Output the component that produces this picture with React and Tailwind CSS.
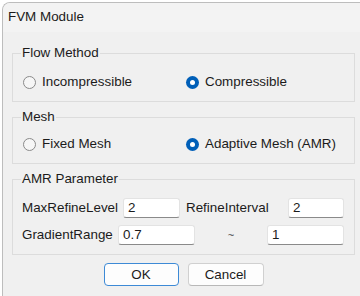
const font = { fontFamily: '"Liberation Sans", Arial, sans-serif' };

const Radio = ({ checked, label, className = '' }) => (
  <label className={`flex items-center h-[20px] ${className}`}>
    {checked ? (
      <span className="w-[13px] h-[13px] rounded-full bg-[#005fb8] flex items-center justify-center">
        <span className="w-[5px] h-[5px] rounded-full bg-white" />
      </span>
    ) : (
      <span className="w-[13px] h-[13px] rounded-full border border-[#8a8a8a] bg-[#f6f6f6]" />
    )}
    <span className="ml-[6px]">{label}</span>
  </label>
);

const Group = ({ title, className = '', children }) => (
  <fieldset className={`w-[343px] border border-[#dcdcdc] px-[8px] ${className}`}>
    <legend className="px-[1px] leading-[18px]">{title}</legend>
    {children}
  </fieldset>
);

const Field = ({ value, className = '' }) => (
  <div
    className={`h-[20px] bg-white border border-[#e3e3e3] border-b-[#8a8a8a] rounded-[3px] pl-[4px] flex items-center ${className}`}
  >
    {value}
  </div>
);

export default function App() {
  return (
    <div className="w-[360px] h-[296px] bg-white pl-[2px] pt-[2px] overflow-hidden text-[13.4px] text-[#1b1b1b]" style={font}>
      <div className="h-[400px] w-[400px] border-l border-t border-[#bdbdbd] rounded-tl-[8px] bg-[#f0f0f0] overflow-hidden">
        <div className="h-[29px] bg-[#f3f3f3] pl-[5px] flex items-center">FVM Module</div>

        <div className="ml-[9px]">
          <Group title="Flow Method" className="mt-[12px] pt-[10px] pb-[9px]">
            <div className="flex ml-[2px]">
              <Radio label="Incompressible" className="w-[163px]" />
              <Radio checked label="Compressible" />
            </div>
          </Group>

          <Group title="Mesh" className="mt-[6px] pt-[8px] pb-[9px]">
            <div className="flex ml-[2px]">
              <Radio label="Fixed Mesh" className="w-[163px]" />
              <Radio checked label="Adaptive Mesh (AMR)" />
            </div>
          </Group>

          <Group title="AMR Parameter" className="mt-[6px] pt-[10px] pb-[9px]">
            <div className="flex flex-col gap-[7px] ml-[1px]">
              <div className="flex items-center">
                <span className="w-[101px]">MaxRefineLevel</span>
                <Field value="2" className="w-[57px]" />
                <span className="ml-[6px] w-[102px]">RefineInterval</span>
                <Field value="2" className="w-[56px]" />
              </div>
              <div className="flex items-center">
                <span className="w-[96px]">GradientRange</span>
                <Field value="0.7" className="w-[77px]" />
                <span className="w-[72px] text-center text-[11px] text-[#444]">~</span>
                <Field value="1" className="w-[77px]" />
              </div>
            </div>
          </Group>

          <div className="w-[343px] flex justify-center gap-[9px] mt-[8px]">
            <button className="w-[75px] h-[23px] bg-[#fdfdfd] border border-[#3d8ad6] rounded-[4px]">OK</button>
            <button className="w-[76px] h-[23px] bg-[#fdfdfd] border border-[#d0d0d0] border-b-[#b8b8b8] rounded-[4px]">Cancel</button>
          </div>
        </div>
      </div>
    </div>
  );
}
